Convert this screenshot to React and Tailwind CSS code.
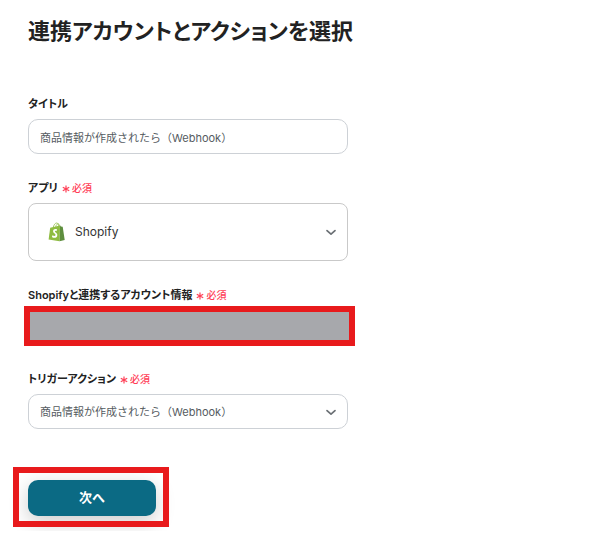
import { useState } from "react";

const ChevronIcon = () => (
  <svg
    className="pointer-events-none absolute right-[11px] top-1/2 h-3 w-3 -translate-y-1/2 text-[#6b7075]"
    viewBox="0 0 12 12"
    fill="none"
    stroke="currentColor"
    strokeWidth="1.7"
    strokeLinecap="round"
    strokeLinejoin="round"
    aria-hidden="true"
  >
    <path d="M2 4.6 6 8.2 10 4.6" />
  </svg>
);

const ShopifyIcon = () => (
  <svg
    className="pointer-events-none absolute left-5 top-1/2 h-5 w-[18px] -translate-y-1/2"
    viewBox="0 0 18 20"
    aria-hidden="true"
  >
    <path
      d="M5.2 5.4C5.8 2.7 7.3 1 8.7 1c1.2 0 1.9 1.3 2.1 3.6M7.7 4.9c.4-2 1.4-3.1 2.5-3 .8.1 1.4.9 1.7 2.3"
      fill="none"
      stroke="#9dc35a"
      strokeWidth=".9"
    />
    <path d="M2.2 5.7 12 3.6 11.6 19.2.6 17.4Z" fill="#8fbc41" />
    <path d="M12 3.6l.9.9 1.8.3 2 13.2-5.1 1.2Z" fill="#5e8e3e" />
    <path
      d="M9.1 7.4c-2.2-.9-4 .1-4 1.9 0 2 2.6 2.2 2.4 3.8-.1 1.2-1.5 1.2-3.1.2l-.5 1.7c2.4 1.6 5.3.9 5.4-1.8.1-2.4-2.5-2.7-2.4-3.9.1-.8 1-.8 1.8-.4Z"
      fill="#fff"
    />
  </svg>
);

const Label = ({ htmlFor, required, children }) => (
  <label
    htmlFor={htmlFor}
    className="flex h-5 items-center gap-1 text-[11px] font-semibold text-[#222] [font-feature-settings:'palt']"
  >
    {children}
    {required && (
      <span className="flex items-center gap-0.5 text-[10px] font-medium text-[#ff4057]">
        <svg
          className="mt-0.5 h-2 w-2"
          viewBox="0 0 8 8"
          stroke="currentColor"
          strokeWidth="1.2"
          aria-hidden="true"
        >
          <path d="M4 .4v7.2M.8 2.2l6.4 3.6M.8 5.8l6.4-3.6" />
        </svg>
        必須
      </span>
    )}
  </label>
);

export default function App() {
  const [title, setTitle] = useState("商品情報が作成されたら（Webhook）");

  return (
    <main className="px-7 py-[15px] font-['Inter','Noto_Sans_CJK_JP',sans-serif]">
      <h1 className="text-[22px] leading-8 font-semibold text-[#222] [font-feature-settings:'palt']">
        連携アカウントとアクションを選択
      </h1>

      <form
        className="mt-[47px] flex w-full max-w-80 flex-col gap-6"
        onSubmit={(e) => e.preventDefault()}
      >
        <div className="flex flex-col gap-[5px]">
          <Label htmlFor="title">タイトル</Label>
          <input
            id="title"
            type="text"
            value={title}
            onChange={(e) => setTitle(e.target.value)}
            className="h-[35px] w-full rounded-[10px] border border-[#cdd1d6] px-[11px] text-[11px] text-[#555b61]"
          />
        </div>

        <div className="flex flex-col gap-[5px]">
          <Label htmlFor="app" required>
            アプリ
          </Label>
          <div className="relative">
            <select
              id="app"
              className="block h-[58px] w-full appearance-none rounded-lg border border-[#c9c9c9] bg-white pr-8 pl-[46px] text-xs text-[#333]"
            >
              <option>Shopify</option>
            </select>
            <ShopifyIcon />
            <ChevronIcon />
          </div>
        </div>

        <div className="flex flex-col gap-[5px]">
          <Label htmlFor="account" required>
            Shopifyと連携するアカウント情報
          </Label>
          <div className="relative">
            <select
              id="account"
              className="block h-[35px] w-full appearance-none rounded-[10px] border border-[#cdd1d6] bg-white"
            >
              <option></option>
            </select>
            {/* Masked account name with a highlight frame */}
            <div className="pointer-events-none absolute -top-1 -right-[7px] -bottom-px -left-1 border-6 border-[#e81a1c] bg-[#a7a8ac]" />
          </div>
        </div>

        <div className="flex flex-col gap-[5px]">
          <Label htmlFor="trigger" required>
            トリガーアクション
          </Label>
          <div className="relative">
            <select
              id="trigger"
              className="block h-[35px] w-full appearance-none rounded-[10px] border border-[#cdd1d6] bg-white pt-0.5 pr-8 pl-[11px] text-[11px] text-[#555b61]"
            >
              <option>商品情報が作成されたら（Webhook）</option>
            </select>
            <ChevronIcon />
          </div>
        </div>

        <div className="relative mt-[27px] w-32">
          <button
            type="submit"
            className="block h-9 w-full rounded-[10px] bg-[#0b6a84] text-[13px] font-bold text-white shadow-[0_6px_20px_rgba(0,0,0,0.2)]"
          >
            次へ
          </button>
          <div className="pointer-events-none absolute -top-[13px] -right-[13px] -bottom-[11px] -left-[15px] border-6 border-[#e81a1c]" />
        </div>
      </form>
    </main>
  );
}
